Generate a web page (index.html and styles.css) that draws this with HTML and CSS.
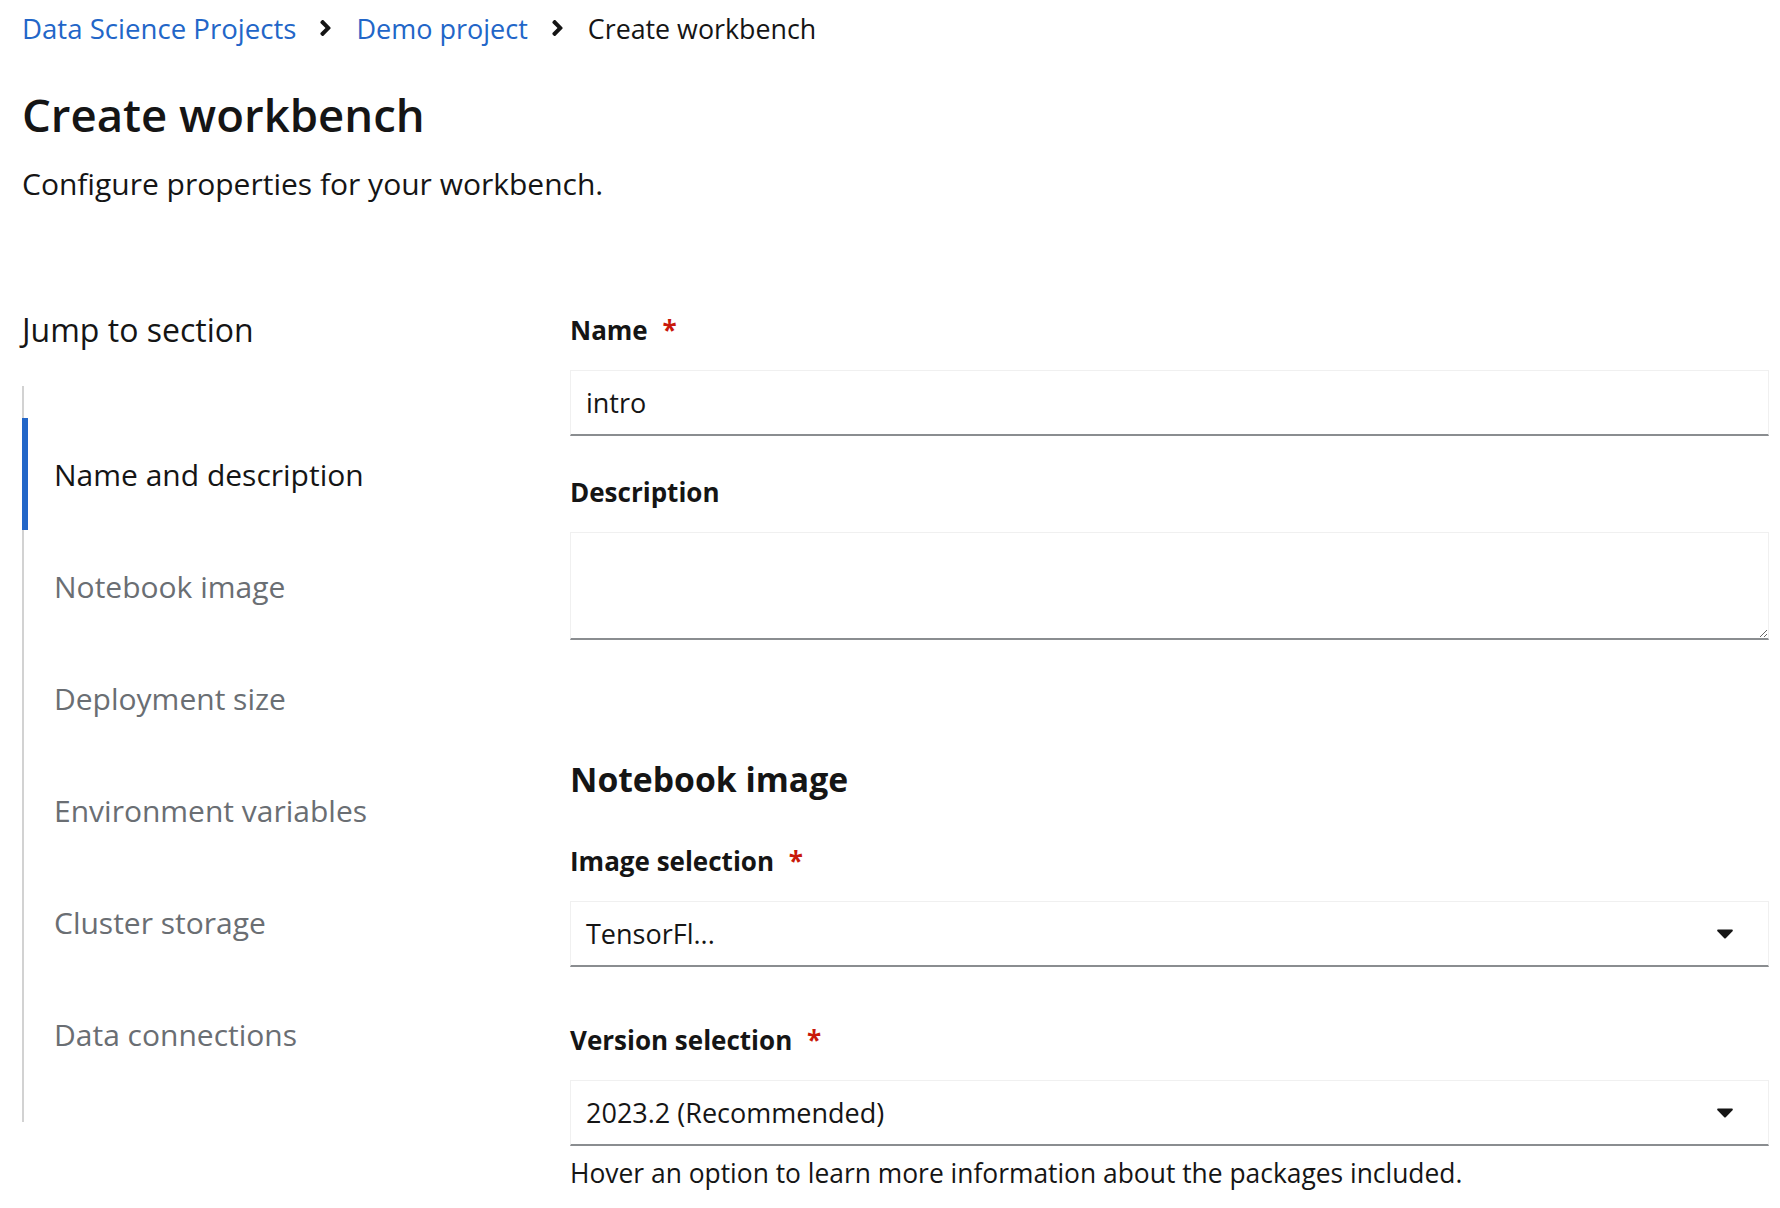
FILE: index.html
```html
<!DOCTYPE html>
<html lang="en">
<head>
<meta charset="utf-8">
<title>Create workbench</title>
<link rel="stylesheet" href="styles.css">
</head>
<body>
<div class="page">
  <nav class="breadcrumb">
    <a class="crumb-link" href="#">Data Science Projects</a>
    <svg class="crumb-sep" viewBox="24 96 208 320" width="11" height="16"><path d="M224.3 273l-136 136c-9.4 9.4-24.6 9.4-33.9 0l-22.6-22.6c-9.4-9.4-9.4-24.6 0-33.9l96.4-96.4-96.4-96.4c-9.4-9.4-9.4-24.6 0-33.9L54.3 103c9.4-9.4 24.6-9.4 33.9 0l136 136c9.5 9.4 9.5 24.6.1 34z"/></svg>
    <a class="crumb-link crumb-demo" href="#">Demo project</a>
    <svg class="crumb-sep" viewBox="24 96 208 320" width="11" height="16"><path d="M224.3 273l-136 136c-9.4 9.4-24.6 9.4-33.9 0l-22.6-22.6c-9.4-9.4-9.4-24.6 0-33.9l96.4-96.4-96.4-96.4c-9.4-9.4-9.4-24.6 0-33.9L54.3 103c9.4-9.4 24.6-9.4 33.9 0l136 136c9.5 9.4 9.5 24.6.1 34z"/></svg>
    <span class="crumb-current">Create workbench</span>
  </nav>
  <h1 class="title">Create workbench</h1>
  <p class="subtitle">Configure properties for your workbench.</p>

  <div class="main">
    <aside class="jump">
      <div class="jump-label">Jump to section</div>
      <ul class="jump-list">
        <li class="jump-item active">Name and description</li>
        <li class="jump-item">Notebook image</li>
        <li class="jump-item">Deployment size</li>
        <li class="jump-item">Environment variables</li>
        <li class="jump-item">Cluster storage</li>
        <li class="jump-item">Data connections</li>
      </ul>
    </aside>

    <form class="form">
      <div class="field">
        <label class="label">Name <span class="req">*</span></label>
        <input class="control" type="text" value="intro">
      </div>
      <div class="field">
        <label class="label">Description</label>
        <textarea class="control textarea"></textarea>
      </div>

      <h2 class="section-title">Notebook image</h2>

      <div class="field">
        <label class="label">Image selection <span class="req">*</span></label>
        <div class="control select">
          <span>TensorFl...</span>
          <svg class="caret" viewBox="8 192 304 168" width="16" height="10"><path d="M31.3 192h257.3c17.8 0 26.7 21.5 14.1 34.1L174.1 354.8c-7.8 7.8-20.5 7.8-28.3 0L17.2 226.1C4.6 213.5 13.5 192 31.3 192z"/></svg>
        </div>
      </div>
      <div class="field field-version">
        <label class="label">Version selection <span class="req">*</span></label>
        <div class="control select">
          <span>2023.2 (Recommended)</span>
          <svg class="caret" viewBox="8 192 304 168" width="16" height="10"><path d="M31.3 192h257.3c17.8 0 26.7 21.5 14.1 34.1L174.1 354.8c-7.8 7.8-20.5 7.8-28.3 0L17.2 226.1C4.6 213.5 13.5 192 31.3 192z"/></svg>
        </div>
        <div class="helper">Hover an option to learn more information about the packages included.</div>
      </div>
    </form>
  </div>
</div>
</body>
</html>
```

FILE: styles.css
```css
* { box-sizing: border-box; }
html, body {
  margin: 0;
  background: #fff;
}
body {
  font-family: "Open Sans", "Noto Sans", sans-serif;
  color: #151515;
  overflow: hidden;
}
.page {
  padding: 8px 11px 0 22px;
}
.breadcrumb {
  display: flex;
  align-items: center;
  height: 40px;
  font-size: 27.6px;
}
.crumb-link {
  color: #2266c8;
  text-decoration: none;
}
.crumb-demo {
  font-size: 27px;
}
.crumb-sep {
  fill: #151515;
  margin: 0 25px 0 24px;
}
.crumb-current {
  color: #151515;
  font-size: 26.8px;
}
.title {
  margin: 36px 0 0;
  font-size: 45.5px;
  font-weight: 600;
  line-height: 60px;
}
.subtitle {
  margin: 20px 0 0;
  font-size: 30px;
  line-height: 40px;
}
.main {
  display: grid;
  grid-template-columns: 548px 1fr;
  margin-top: 106px;
}
.jump-label {
  font-size: 32px;
  line-height: 40px;
}
.jump-list {
  list-style: none;
  margin: 36px 0 0;
  padding: 32px 0;
  border-left: 2px solid #d2d2d2;
}
.jump-item {
  height: 112px;
  display: flex;
  align-items: center;
  padding-left: 26px;
  margin-left: -2px;
  font-size: 30px;
  color: #6a6e73;
  border-left: 6px solid transparent;
}
.jump-item.active {
  color: #151515;
  border-left-color: #2266c8;
}
.form {
  display: flex;
  flex-direction: column;
}
.field {
  display: flex;
  flex-direction: column;
  margin-bottom: 36px;
}
.label {
  font-size: 26px;
  font-weight: 700;
  line-height: 40px;
  margin-bottom: 20px;
}
.req {
  color: #c9190b;
  margin-left: 8px;
}
.control {
  font-family: inherit;
  font-size: 27px;
  color: #151515;
  border: 1px solid #f0f0f0;
  border-bottom: 2px solid #8a8d90;
  background: #fff;
  padding: 0 16px 0 15px;
  outline: none;
  border-radius: 0;
}
input.control {
  height: 66px;
}
.textarea {
  height: 108px;
  resize: vertical;
  padding-top: 12px;
}
.section-title {
  margin: 79px 0 38px;
  font-size: 33.7px;
  font-weight: 700;
  line-height: 48px;
}
.select {
  height: 66px;
  display: flex;
  align-items: center;
  justify-content: space-between;
  padding-right: 35px;
}
.caret {
  fill: #151515;
}
.field + .field-version {
  margin-top: 17px;
}
.helper {
  margin-top: 11px;
  font-size: 26.4px;
  line-height: 32px;
}
```
